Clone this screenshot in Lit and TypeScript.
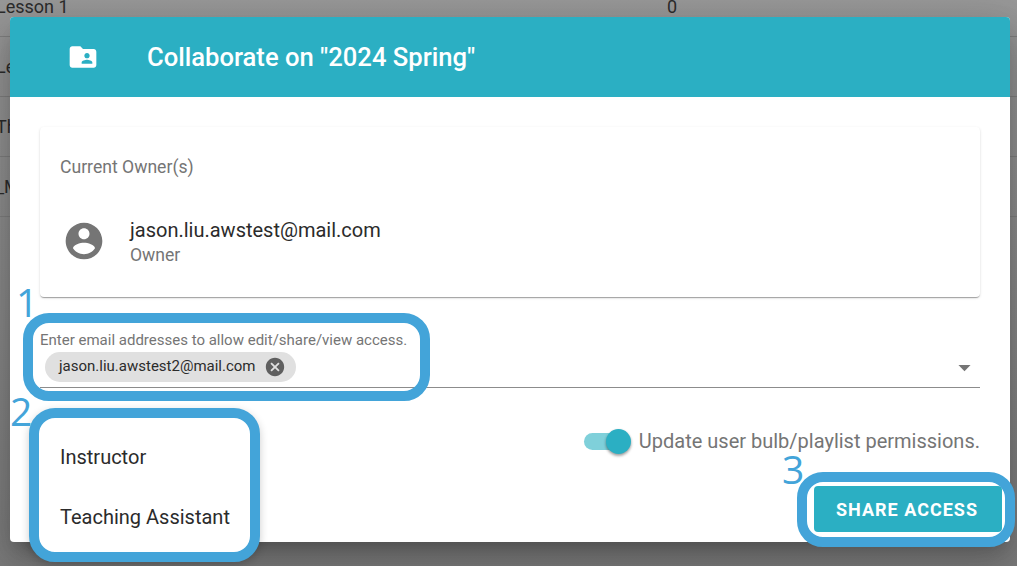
import { LitElement, html, css } from "lit";
import { customElement } from "lit/decorators.js";

@customElement("app-root")
export class AppRoot extends LitElement {
  static styles = css`
    :host { display: block; width: 1017px; height: 566px; position: relative; overflow: hidden; font-family: Roboto, "Liberation Sans", sans-serif; background: linear-gradient(#989898, #7c7c7c); }
    * { box-sizing: border-box; }
    .page { margin-top: -23px; }
    .row { height: 60px; border-bottom: 1px solid #7f7f7f; display: flex; align-items: center; font-size: 18px; color: #2c2c2c; padding-left: 0; }
    .row .name { margin-left: -4px; width: 671px; }
    .dialog { position: absolute; left: 10px; top: 17px; width: 1000px; height: 525px; background: #fff; border-radius: 4px; display: flex; flex-direction: column; box-shadow: 0 11px 15px -7px rgba(0,0,0,.2), 0 24px 38px 3px rgba(0,0,0,.14), 0 9px 46px 8px rgba(0,0,0,.12); }
    .head { height: 80px; flex: none; background: #2bafc3; border-radius: 4px 4px 0 0; display: flex; align-items: center; padding-left: 57px; color: #fff; }
    .head svg { width: 32px; height: 32px; fill: #fff; margin-right: 48px; flex: none; }
    .head h2 { margin: 0; font-size: 25.6px; font-weight: 500; }
    .body { padding: 30px 30px 0; }
    .card { height: 170px; border-radius: 4px; background: #fff; padding: 30px 20px 0; box-shadow: 0 2px 1px -1px rgba(0,0,0,.2), 0 1px 1px 0 rgba(0,0,0,.14), 0 1px 3px 0 rgba(0,0,0,.12); }
    .card .label { font-size: 17.6px; line-height: 20px; color: #757575; }
    .owner { display: flex; align-items: center; margin-top: 40px; }
    .owner svg { width: 44px; height: 44px; fill: #757575; margin: -2px 24px 0 2px; flex: none; }
    .owner .mail { font-size: 20px; line-height: 26px; color: #2b2b2b; }
    .owner .role { font-size: 17.6px; line-height: 24px; color: #757575; }
    .field { margin-top: 35px; border-bottom: 1px solid #8c8c8c; padding-bottom: 5px; height: 56px; }
    .field .label { font-size: 15px; line-height: 16px; color: #757575; white-space: nowrap; }
    .line { display: flex; align-items: center; justify-content: space-between; margin-top: 4px; height: 30px; padding-right: 1px; }
    .line > svg { width: 29px; height: 29px; fill: #757575; }
    .chip { margin-left: 5px; height: 30px; border-radius: 15px; background: #e0e0e0; display: flex; align-items: center; padding: 0 10px 2px 14px; font-size: 15px; color: #2b2b2b; }
    .chip svg { width: 22px; height: 22px; fill: #5f5f5f; margin: 2px 0 0 8px; }
    .toggle-row { display: flex; justify-content: flex-end; align-items: center; gap: 7px; height: 25px; margin-top: 41px; padding-bottom: 1px; font-size: 20px; color: #757575; white-space: nowrap; }
    .switch { position: relative; width: 47px; height: 25px; flex: none; margin-top: 1px; left: -1px; }
    .track { position: absolute; left: 0; right: 3px; top: 4px; height: 17px; border-radius: 9px; background: #7fd0da; }
    .knob { position: absolute; right: 0; top: 0; width: 25px; height: 25px; border-radius: 50%; background: #2bafc3; box-shadow: 0 2px 3px 0 rgba(0,0,0,.3), 0 1px 3px 0 rgba(0,0,0,.14); }
    .actions { margin-top: auto; display: flex; justify-content: flex-end; padding: 0 8px 10px; }
    .share { width: 188px; height: 46px; border: 0; border-radius: 4px; background: #2bafc3; color: #fff; font-family: inherit; font-size: 18px; font-weight: 700; letter-spacing: 1px; padding: 0 2px 0 0; }
    .frame { position: absolute; border: 10px solid #43a4d9; border-radius: 26px; pointer-events: none; }
    .f1 { left: 23px; top: 313px; width: 407px; height: 88px; }
    .f3 { left: 797px; top: 472px; width: 218px; height: 75px; }
    .menu { position: absolute; left: 29px; top: 408px; width: 231px; height: 154px; border: 10px solid #43a4d9; border-radius: 26px; background: #fff; padding-top: 9px; box-shadow: 0 3px 8px rgba(0,0,0,.2); }
    .item { height: 60px; display: flex; align-items: center; padding-left: 21px; font-size: 20px; color: #2b2b2b; white-space: nowrap; }
    .num { position: absolute; font-family: "Open Sans", sans-serif; font-weight: 400; font-size: 39px; line-height: 39px; color: #43a4d9; }
    .n1 { left: 16px; top: 282px; }
    .n2 { left: 10px; top: 391px; }
    .n3 { left: 782px; top: 449px; }
  `;

  render() {
    return html`
      <div class="page">
        <div class="row"><span class="name">Lesson 1</span><span>0</span></div>
        <div class="row"><span class="name">Le</span></div>
        <div class="row"><span class="name">Th</span></div>
        <div class="row"><span class="name">_M</span></div>
      </div>
      <div class="dialog">
        <div class="head">
          <svg viewBox="0 0 24 24"><path d="M20 6h-8l-2-2H4c-1.1 0-1.99.9-1.99 2L2 18c0 1.1.9 2 2 2h16c1.1 0 2-.9 2-2V8c0-1.1-.9-2-2-2zm-5 3c1.1 0 2 .9 2 2s-.9 2-2 2-2-.9-2-2 .9-2 2-2zm4 8h-8v-1c0-1.33 2.67-2 4-2s4 .67 4 2v1z"/></svg>
          <h2>Collaborate on "2024 Spring"</h2>
        </div>
        <div class="body">
          <div class="card">
            <div class="label">Current Owner(s)</div>
            <div class="owner">
              <svg viewBox="0 0 24 24"><path d="M12 2C6.48 2 2 6.48 2 12s4.48 10 10 10 10-4.48 10-10S17.52 2 12 2zm0 3c1.66 0 3 1.34 3 3s-1.34 3-3 3-3-1.34-3-3 1.34-3 3-3zm0 14.2c-2.5 0-4.71-1.28-6-3.22.03-1.99 4-3.08 6-3.08 1.99 0 5.97 1.09 6 3.08-1.29 1.94-3.5 3.22-6 3.22z"/></svg>
              <div>
                <div class="mail">jason.liu.awstest@mail.com</div>
                <div class="role">Owner</div>
              </div>
            </div>
          </div>
          <div class="field">
            <div class="label">Enter email addresses to allow edit/share/view access.</div>
            <div class="line">
              <div class="chip">jason.liu.awstest2@mail.com
                <svg viewBox="0 0 24 24"><path d="M12 2C6.47 2 2 6.47 2 12s4.47 10 10 10 10-4.47 10-10S17.53 2 12 2zm5 13.59L15.59 17 12 13.41 8.41 17 7 15.59 10.59 12 7 8.41 8.41 7 12 10.59 15.59 7 17 8.41 13.41 12 17 15.59z"/></svg>
              </div>
              <svg viewBox="0 0 24 24"><path d="M7 10l5 5 5-5z"/></svg>
            </div>
          </div>
          <div class="toggle-row">
            <div class="switch"><div class="track"></div><div class="knob"></div></div>
            <span>Update user bulb/playlist permissions.</span>
          </div>
        </div>
        <div class="actions"><button class="share">SHARE ACCESS</button></div>
      </div>
      <div class="menu">
        <div class="item">Instructor</div>
        <div class="item">Teaching Assistant</div>
      </div>
      <div class="frame f1"></div>
      <div class="frame f3"></div>
      <div class="num n1">1</div>
      <div class="num n2">2</div>
      <div class="num n3">3</div>
    `;
  }
}
